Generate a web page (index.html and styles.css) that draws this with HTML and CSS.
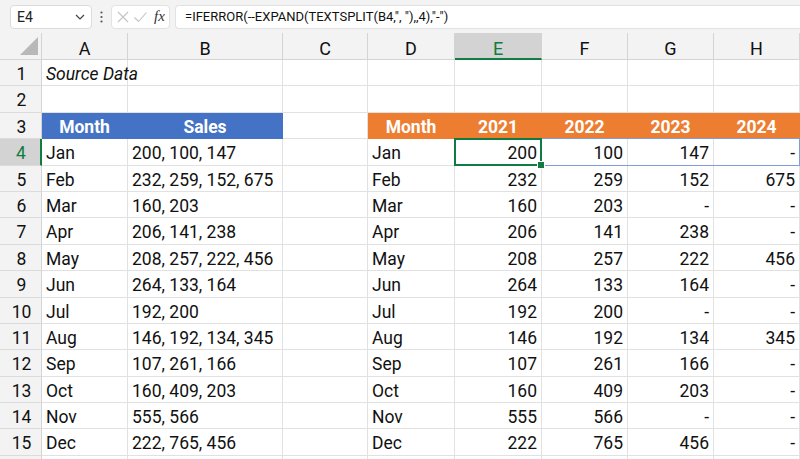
FILE: index.html
```html
<!DOCTYPE html>
<html>
<head>
    <title>Split Sales</title>
    <link rel="stylesheet" href="styles.css">
</head>
<body>

<div class="formula-bar">
    <div class="name-box">
        <span>E4</span>
        <svg width="10" height="6" viewBox="0 0 10 6"><path d="M1 1 L5 5 L9 1" fill="none" stroke="#444" stroke-width="1.2"/></svg>
    </div>
    <div class="dots">
        <svg width="3" height="12" viewBox="0 0 3 12"><circle cx="1.5" cy="1.5" r="1.1" fill="#555"/><circle cx="1.5" cy="6" r="1.1" fill="#555"/><circle cx="1.5" cy="10.5" r="1.1" fill="#555"/></svg>
    </div>
    <div class="fx-box">
        <svg width="14" height="14" viewBox="0 0 14 14"><path d="M2 2 L12 12 M12 2 L2 12" stroke="#c4c4c4" stroke-width="1.1"/></svg>
        <svg width="15" height="14" viewBox="0 0 15 14"><path d="M1.5 7.5 L5.5 11.5 L13.5 2.5" fill="none" stroke="#c4c4c4" stroke-width="1.1"/></svg>
        <span class="fx">fx</span>
    </div>
    <div class="formula">=IFERROR(--EXPAND(TEXTSPLIT(B4,", "),,4),"-")</div>
</div>

<div class="sheet" id="sheet"></div>

<script>
    // Source rows: month + comma list
    const source = [
        ['Jan', '200, 100, 147'],
        ['Feb', '232, 259, 152, 675'],
        ['Mar', '160, 203'],
        ['Apr', '206, 141, 238'],
        ['May', '208, 257, 222, 456'],
        ['Jun', '264, 133, 164'],
        ['Jul', '192, 200'],
        ['Aug', '146, 192, 134, 345'],
        ['Sep', '107, 261, 166'],
        ['Oct', '160, 409, 203'],
        ['Nov', '555, 566'],
        ['Dec', '222, 765, 456']
    ];
    const letters = ['A', 'B', 'C', 'D', 'E', 'F', 'G', 'H'];
    const sheet = document.getElementById('sheet');

    function cell(cls, text) {
        const div = document.createElement('div');
        div.className = 'cell ' + cls;
        if (text) div.textContent = text;
        sheet.appendChild(div);
        return div;
    }

    // Column headers
    const corner = cell('corner');
    corner.innerHTML = '<svg width="20" height="20" viewBox="0 0 20 20"><path d="M19 1 L19 19 L1 19 Z" fill="#b8b8b8"/></svg>';
    letters.forEach(function(l) {
        cell('col-head' + (l === 'E' ? ' active' : ''), l);
    });

    // Rows 1-15, plus the edge of row 16 (only its gridlines show)
    for (let r = 1; r <= 16; r++) {
        cell('row-head' + (r === 4 ? ' active' : ''), r < 16 ? String(r) : '');
        const src = source[r - 4];
        let cells = ['', '', '', '', '', '', '', ''];
        let cls = ['', '', '', '', 'num', 'num', 'num', 'num'];

        if (r === 1) {
            cells[0] = 'Source Data';
            cls[0] = 'italic';
        } else if (r === 3) {
            cells = ['Month', 'Sales', '', 'Month', '2021', '2022', '2023', '2024'];
            cls = ['blue', 'blue', '', 'orange', 'orange', 'orange', 'orange', 'orange'];
        } else if (src) {
            const parts = src[1].split(', ');
            cells[0] = src[0];
            cells[1] = src[1];
            cells[3] = src[0];
            for (let i = 0; i < 4; i++) cells[4 + i] = parts[i] || '-';
        }

        cells.forEach(function(text, i) {
            const c = cell(cls[i], text);
            if (r === 4 && i === 4) {
                c.classList.add('selected');
                c.innerHTML += '<div class="spill"></div><div class="sel-box"><span class="handle"></span></div>';
            }
        });
    }
</script>

</body>
</html>
```

FILE: styles.css
```css
body {
    margin: 0;
    background: #fff;
    font-family: Roboto, "Liberation Sans", sans-serif;
    color: #111;
    overflow: hidden;
}

/* Formula bar */
.formula-bar {
    height: 33px;
    background: #f3f3f3;
    display: flex;
    align-items: center;
    padding-left: 10px;
    box-sizing: border-box;
}
.name-box {
    width: 82px;
    height: 24px;
    box-sizing: border-box;
    background: #fff;
    border: 1px solid #dcdcdc;
    border-radius: 4px;
    display: flex;
    align-items: center;
    justify-content: space-between;
    padding: 0 6px 0 6px;
    font-size: 14px;
    color: #222;
}
.dots {
    width: 19px;
    display: flex;
    justify-content: center;
}
.fx-box {
    width: 59px;
    height: 24px;
    box-sizing: border-box;
    background: #fff;
    border: 1px solid #e2e2e2;
    border-radius: 4px;
    display: flex;
    align-items: center;
    gap: 3px;
    padding-left: 4px;
}
.fx {
    font-family: "Liberation Serif", serif;
    font-style: italic;
    font-size: 15px;
    color: #333;
    margin-left: 3px;
}
.formula {
    flex: 1;
    margin-left: 5px;
    height: 24px;
    box-sizing: border-box;
    background: #fff;
    border: 1px solid #e2e2e2;
    border-right: none;
    border-radius: 4px 0 0 4px;
    padding-left: 9px;
    font-size: 13px;
    line-height: 22px;
    color: #111;
    white-space: nowrap;
}

/* Grid */
.sheet {
    display: grid;
    grid-template-columns: 42px 86px 155px 85px 87px 87px 86px 86px 86px;
    grid-template-rows: 27px;
    grid-auto-rows: 26.4px;
}
.cell {
    box-sizing: border-box;
    border-right: 1px solid #e1e1e1;
    border-bottom: 1px solid #e1e1e1;
    padding: 3px 4px 0 4px;
    font-size: 17.5px;
    line-height: 23px;
    white-space: nowrap;
}
.corner {
    background: #f3f3f3;
    border-right: 1px solid #d4d4d4;
    border-bottom: 1px solid #d4d4d4;
    padding: 0 2px 3px 0;
    display: flex;
    align-items: flex-end;
    justify-content: flex-end;
}
.col-head {
    background: #f3f3f3;
    border-right: 1px solid #d4d4d4;
    border-bottom: 1px solid #d4d4d4;
    text-align: center;
    font-size: 18px;
    padding-top: 4px;
}
.col-head.active {
    background: #d3d3d3;
    color: #107c41;
    border-bottom: 2px solid #107c41;
}
.row-head {
    background: #f3f3f3;
    border-right: 1px solid #d4d4d4;
    border-bottom: 1px solid #dcdcdc;
    text-align: center;
    padding-left: 2px;
    padding-right: 0;
}
.row-head.active {
    background: #d3d3d3;
    color: #107c41;
    border-right: 2px solid #107c41;
}
.italic {
    font-style: italic;
}
.num {
    text-align: right;
}
.blue, .orange {
    color: #fff;
    font-weight: bold;
    text-align: center;
}
.blue {
    background: #4472c4;
    border-color: #4472c4;
}
.orange {
    background: #ed7d31;
    border-color: #ed7d31;
}

/* Selection and spill range */
.selected {
    position: relative;
}
.spill {
    position: absolute;
    left: -1px;
    top: -1px;
    width: 346px;
    bottom: -1px;
    border: 1px solid #7f9ed8;
    box-sizing: border-box;
}
.sel-box {
    position: absolute;
    left: -1px;
    top: -1px;
    right: -1px;
    bottom: -1px;
    border: 2px solid #107c41;
}
.handle {
    position: absolute;
    right: -5px;
    bottom: -5px;
    width: 6px;
    height: 6px;
    background: #107c41;
    border: 1px solid #fff;
}
```
